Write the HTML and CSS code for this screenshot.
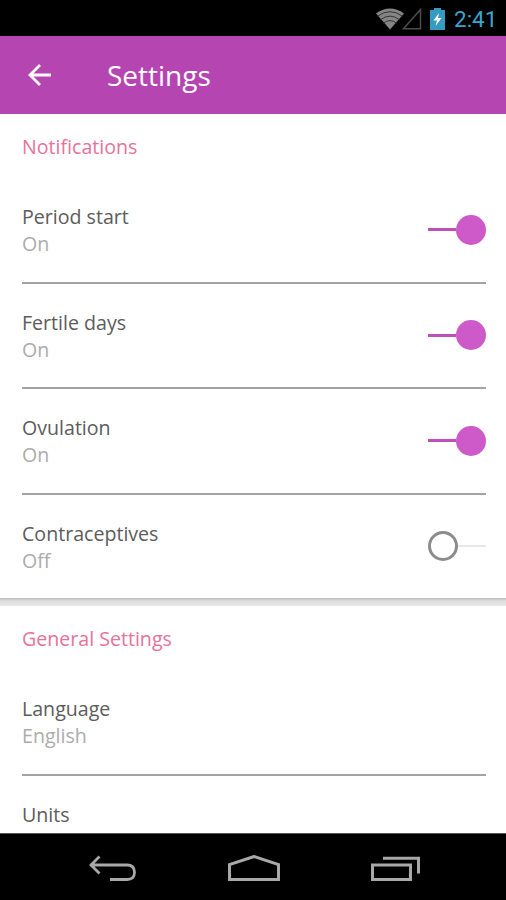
FILE: index.html
```html
<!DOCTYPE html>
<html lang="en">
<head>
  <meta charset="UTF-8">
  <meta name="viewport" content="width=device-width, initial-scale=1.0">
  <title>Settings</title>
  <link rel="stylesheet" href="styles.css">
</head>
<body>
  <div class="status-bar">
    <svg class="wifi" width="28" height="22" viewBox="0 0 28 22">
      <path d="M0 5.5Q14 -4.5 28 5.5L14 21.5Z" fill="#858585"/>
      <path d="M1.5 8.2Q14 -0.8 26.5 8.2M4.5 11.7Q14 4.5 23.5 11.7M7.5 15.2Q14 10 20.5 15.2" fill="none" stroke="#333" stroke-width="1"/>
    </svg>
    <svg class="signal" width="20" height="22" viewBox="0 0 20 22">
      <path d="M1.5 20.8H18.5V1.5Z" fill="none" stroke="#4c4c4c" stroke-width="1.5"/>
    </svg>
    <svg class="battery" width="15" height="22" viewBox="0 0 15 22">
      <path d="M4 0H11V2H15V22H0V2H4Z" fill="#369bc1"/>
      <path d="M9 5L3.5 12.5H7L5.5 18L11.5 10H8Z" fill="#fff"/>
    </svg>
    <span class="clock">2:41</span>
  </div>

  <header class="app-bar">
    <svg class="back" width="24" height="24" viewBox="0 0 24 24">
      <path d="M12 2L2 12L12 22M2 12H23" fill="none" stroke="#fff" stroke-width="2.8"/>
    </svg>
    <h1>Settings</h1>
  </header>

  <main>
    <section>
      <h2>Notifications</h2>
      <div class="row">
        <div class="label"><p>Period start</p><p class="value">On</p></div>
        <div class="toggle on"></div>
      </div>
      <div class="row">
        <div class="label"><p>Fertile days</p><p class="value">On</p></div>
        <div class="toggle on"></div>
      </div>
      <div class="row">
        <div class="label"><p>Ovulation</p><p class="value">On</p></div>
        <div class="toggle on"></div>
      </div>
      <div class="row">
        <div class="label"><p>Contraceptives</p><p class="value">Off</p></div>
        <div class="toggle"></div>
      </div>
    </section>
    <div class="separator"></div>
    <section>
      <h2>General Settings</h2>
      <div class="row">
        <div class="label"><p>Language</p><p class="value">English</p></div>
      </div>
      <div class="row">
        <div class="label"><p>Units</p></div>
      </div>
    </section>
  </main>

  <nav class="nav-bar">
    <svg width="48" height="28" viewBox="0 0 48 28">
      <path d="M10.5 1.5L2 10L10.5 18.5M2 10H38Q45.5 10 45.5 17.3T38 24.5H21" fill="none" stroke="#a8a8a8" stroke-width="2.8"/>
    </svg>
    <svg width="52" height="28" viewBox="0 0 52 28">
      <path d="M1.5 24.5V9.5L26 1.5L50.5 9.5V24.5Z" fill="none" stroke="#a8a8a8" stroke-width="3"/>
    </svg>
    <svg width="50" height="28" viewBox="0 0 50 28">
      <path d="M1.5 10H39.5V24.5H1.5ZM12 3.2H47.5V18.5" fill="none" stroke="#a8a8a8" stroke-width="3"/>
    </svg>
  </nav>
</body>
</html>
```

FILE: styles.css
```css
*, *::before, *::after {
  box-sizing: border-box;
}

body {
  margin: 0;
  height: 900px;
  display: flex;
  flex-direction: column;
  overflow: hidden;
  font-family: "Open Sans", sans-serif;
  background: #fff;
}

h1, h2, p {
  margin: 0;
}

.status-bar {
  flex: none;
  height: 36px;
  display: flex;
  align-items: center;
  justify-content: flex-end;
  padding: 1px 9px 0 0;
  background: #000;
}

.wifi {
  margin-right: -2px;
}

.signal {
  margin-right: 8px;
}

.battery {
  margin-right: 9px;
}

.clock {
  width: 43px;
  font-family: Roboto, sans-serif;
  font-size: 22.5px;
  line-height: 36px;
  color: #3ba5cc;
}

.app-bar {
  flex: none;
  height: 78px;
  display: flex;
  align-items: center;
  padding-left: 28px;
  background: #b545b1;
}

.app-bar h1 {
  margin-left: 55px;
  font-size: 28px;
  font-weight: 400;
  color: #fff;
}

main {
  flex: 1;
  min-height: 0;
  overflow: hidden;
}

section {
  padding: 0 20px 0 22px;
}

h2 {
  height: 64px;
  font-size: 19.6px;
  font-weight: 400;
  line-height: 65px;
  color: #e6739a;
}

.row {
  height: 105.5px;
  display: flex;
  align-items: flex-start;
  justify-content: space-between;
  padding-top: 24.6px;
  border-bottom: 2px solid #a3a3a3;
}

.row:last-child {
  height: 103.5px;
  border-bottom: none;
}

.label {
  padding-top: 0.5px;
  font-size: 19.6px;
  line-height: 27px;
  color: #5c5c5c;
}

.value {
  color: #acacac;
}

.toggle {
  width: 58px;
  height: 54px;
  display: flex;
  align-items: center;
}

.toggle::before {
  content: "";
  width: 30px;
  height: 30px;
  border: 3px solid #8c8c8c;
  border-radius: 50%;
}

.toggle::after {
  content: "";
  flex: 1;
  height: 2px;
  background: #e8e8e8;
}

.toggle.on {
  flex-direction: row-reverse;
}

.toggle.on::before {
  border: none;
  background: #cd5ac8;
}

.toggle.on::after {
  height: 3px;
  background: #bf50ba;
}

.separator {
  height: 8px;
  background: linear-gradient(#bcbcbc, #dedede 3px, #e8e8e8);
}

.nav-bar {
  flex: none;
  height: 67px;
  display: flex;
  align-items: center;
  justify-content: space-between;
  padding: 3px 85px 0 89px;
  border-top: 1px solid #555;
  background: #000;
}
```
